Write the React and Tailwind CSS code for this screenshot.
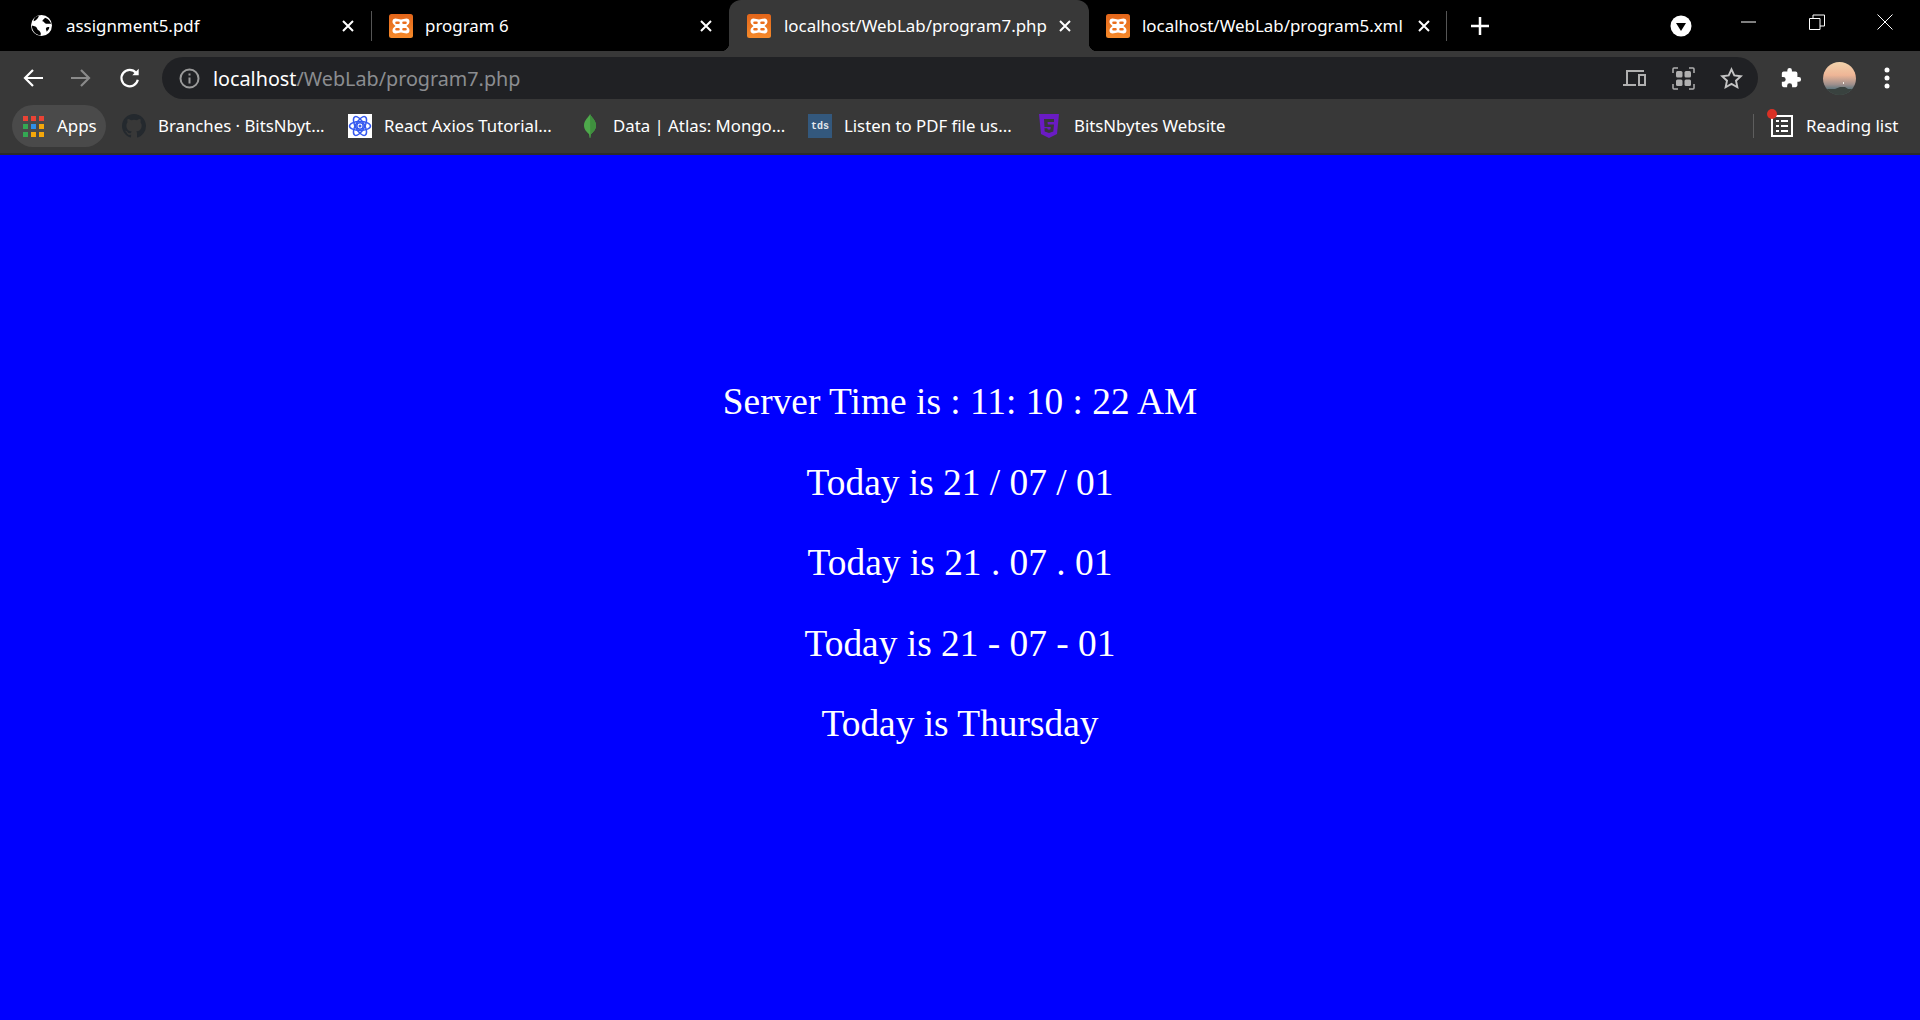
import React from "react";

const UI = { fontFamily: '"Noto Sans", "Open Sans", sans-serif' };

function Xampp() {
  return (
    <svg width="24" height="24" viewBox="0 0 24 24" className="shrink-0">
      <defs>
        <linearGradient id="xg" x1="0" y1="0" x2="0" y2="1">
          <stop offset="0" stopColor="#e2651a" />
          <stop offset="1" stopColor="#f68a2a" />
        </linearGradient>
      </defs>
      <rect width="24" height="24" rx="2.500" fill="url(#xg)" />
      <path d="M6.500 4.500c2 0 3.500 1 5.500 1s3.500-1 5.500-1c3 0 3.500 3 2.500 5-.5 1-1.500 1.800-2.500 2.500 1 .7 2 1.500 2.500 2.500 1 2 .5 5-2.500 5-2 0-3.500-1-5.500-1s-3.500 1-5.500 1c-3 0-3.500-3-2.500-5 .5-1 1.500-1.800 2.500-2.500-1-.7-2-1.500-2.500-2.500-1-2-.5-5 2.500-5z" fill="#fff" />
      <path d="M7.500 8.800h2M14.500 8.800h2M7.500 15.200h2M14.500 15.200h2" stroke="#ea6f1e" strokeWidth="2.600" strokeLinecap="round" />
    </svg>
  );
}

function CloseX() {
  return (
    <svg width="14" height="14" viewBox="0 0 14 14" className="shrink-0">
      <path d="M2 2l10 10M12 2L2 12" stroke="#fff" strokeWidth="2" />
    </svg>
  );
}

function Tab({ width, pad, icon, title, active, sep, gap, closePad }) {
  return (
    <div
      className={`relative flex h-[51px] items-center shrink-0 ${active ? "bg-[#383838] rounded-t-[12px]" : ""}`}
      style={{ width, paddingLeft: pad, paddingRight: closePad }}
    >
      {icon}
      <span className="flex-1 text-[16.900px] text-white whitespace-nowrap" style={{ marginLeft: gap }}>{title}</span>
      <CloseX />
      {sep && <span className="absolute right-0 top-[11px] h-[30px] w-px bg-[#555]" />}
      {active && (
        <>
          <span className="absolute -left-[8px] bottom-0 h-[8px] w-[8px] bg-[radial-gradient(circle_at_0_0,transparent_8px,#383838_8.500px)]" />
          <span className="absolute -right-[8px] bottom-0 h-[8px] w-[8px] bg-[radial-gradient(circle_at_100%_0,transparent_8px,#383838_8.500px)]" />
        </>
      )}
    </div>
  );
}

function Globe() {
  return (
    <svg width="21" height="21" viewBox="0 0 24 24" className="shrink-0">
      <circle cx="12" cy="12" r="12" fill="#fff" />
      <path d="M3 7c3-1 5-3 6-6-3 0-6 2-6 6zM11 23c1-3-1-5-3-6-1-1-1-3-3-4l-4-1c0 6 4 11 10 11zM16 3c-1 2-3 2-3 4 2 0 2 2 4 3h6c-1-3-3-6-7-7zM18 19c1-1 3-3 3-5-2-1-4 0-4 2l1 3z" fill="#000" />
    </svg>
  );
}

function Bookmark({ icon, label, textW, gap, ml }) {
  return (
    <div className="flex items-center shrink-0" style={{ marginLeft: ml }}>
      {icon}
      <span className="text-[16.800px] text-white whitespace-nowrap" style={{ marginLeft: gap, width: textW }}>{label}</span>
    </div>
  );
}

function Grid() {
  const c = ["#ea4335", "#ea4335", "#ea4335", "#34a853", "#2f8fe8", "#f5a70a", "#34a853", "#f5a70a", "#f5a70a"];
  return (
    <div className="grid grid-cols-3 gap-[3px] w-[21px] shrink-0">
      {c.map((x, i) => <span key={i} className="h-[5px] w-[5px]" style={{ background: x }} />)}
    </div>
  );
}

const lines = [
  "Server Time is : 11: 10 : 22 AM",
  "Today is 21 / 07 / 01",
  "Today is 21 . 07 . 01",
  "Today is 21 - 07 - 01",
  "Today is Thursday",
];

export default function App() {
  return (
    <div className="flex h-[1020px] w-[1920px] flex-col overflow-hidden bg-[#0000ff]">
      <header style={UI} className="shrink-0">
        {/* tab strip */}
        <div className="flex h-[51px] items-center bg-black">
          <Tab width={372} pad={31} gap={14} icon={<Globe />} title="assignment5.pdf" closePad={17} sep />
          <Tab width={357} pad={17} gap={12} icon={<Xampp />} title="program 6" closePad={16} />
          <Tab width={360} pad={18} gap={13} icon={<Xampp />} title="localhost/WebLab/program7.php" closePad={17} active />
          <Tab width={358} pad={17} gap={12} icon={<Xampp />} title="localhost/WebLab/program5.xml" closePad={16} sep />
          <svg width="18" height="18" viewBox="0 0 18 18" className="ml-[24px]"><path d="M9 0v18M0 9h18" stroke="#fff" strokeWidth="2.500" /></svg>
          <svg width="22" height="22" viewBox="0 0 22 22" className="ml-[181px]"><circle cx="11" cy="11" r="10.500" fill="#fff" /><path d="M6 8h10l-5 8z" fill="#000" /></svg>
          <svg width="16" height="16" viewBox="0 0 16 16" className="ml-[49px] -mt-[8px]"><path d="M0 8h15" stroke="#fff" strokeWidth="1" /></svg>
          <svg width="16" height="16" viewBox="0 0 16 16" className="ml-[52px] -mt-[8px]"><path d="M.5 4.500h10.500v11H.5zM4 4.500V1h11.500v11H11" fill="none" stroke="#fff" strokeWidth="1" /></svg>
          <svg width="16" height="16" viewBox="0 0 16 16" className="ml-[52px] -mt-[8px]"><path d="M.5.500l15 15M15.500.500l-15 15" stroke="#fff" strokeWidth="1" /></svg>
        </div>
        {/* toolbar */}
        <div className="flex h-[48px] items-end bg-[#383838] pl-[22px]">
          <div className="flex h-[42px] items-center">
            <svg width="22" height="22" viewBox="0 0 22 22"><path d="M21 11H3M11 3l-8 8 8 8" fill="none" stroke="#fff" strokeWidth="2.200" /></svg>
            <svg width="22" height="22" viewBox="0 0 22 22" className="ml-[26px]"><path d="M1 11h18M11 3l8 8-8 8" fill="none" stroke="#8a8a8a" strokeWidth="2.200" /></svg>
            <svg width="22" height="22" viewBox="0 0 24 24" className="ml-[27px]" fill="none" stroke="#fff" strokeWidth="2.400"><path d="M20.500 14a9 9 0 1 1-1.800-7.500" /><path d="M21.500 2v7h-7" fill="#fff" stroke="none" /></svg>
          </div>
          <div className="ml-[21px] flex h-[42px] w-[1596px] items-center rounded-full bg-[#202124] pl-[17px] pr-[15px]">
            <svg width="21" height="21" viewBox="0 0 21 21" className="shrink-0"><circle cx="10.500" cy="10.500" r="9" fill="none" stroke="#9a9a9a" strokeWidth="2" /><path d="M10.500 9.500v6M10.500 5.500v2" stroke="#9a9a9a" strokeWidth="2" /></svg>
            <span className="ml-[13px] flex-1 pt-[2px] text-[19.750px] text-[#8b8d90] whitespace-nowrap"><span className="text-white">localhost</span>/WebLab/program7.php</span>
            <svg width="23" height="19" viewBox="0 0 23 19" fill="none" stroke="#b0b0b0" strokeWidth="2" className="shrink-0"><path d="M20 3V2H4v13M0 16h13" /><rect x="16" y="6" width="6" height="10" /></svg>
            <svg width="23" height="23" viewBox="0 0 23 23" className="ml-[26px] shrink-0" fill="none" stroke="#b0b0b0" strokeWidth="1.500"><path d="M1 6V2a1 1 0 0 1 1-1h4M17 1h4a1 1 0 0 1 1 1v4M22 17v4a1 1 0 0 1-1 1h-4M6 22H2a1 1 0 0 1-1-1v-4" /><g fill="#b0b0b0" stroke="none"><rect x="4" y="4" width="6.500" height="6.500" rx="1.500" /><rect x="12.500" y="4" width="6.500" height="6.500" rx="1.500" /><rect x="4" y="12.500" width="6.500" height="6.500" rx="1.500" /><rect x="12.500" y="12.500" width="6.500" height="6.500" rx="1.500" /></g></svg>
            <svg width="23" height="23" viewBox="0 0 24 24" className="ml-[25px] shrink-0" fill="none" stroke="#c4c4c4" strokeWidth="2"><path d="M12 2.500l2.900 6.300 6.900.8-5.100 4.700 1.400 6.800L12 17.700l-6.100 3.400 1.400-6.800-5.100-4.700 6.900-.8z" /></svg>
          </div>
          <div className="flex h-[42px] items-center">
            <svg width="22" height="22" viewBox="0 0 24 24" fill="#fff" className="ml-[22px]"><path d="M20.500 11H19V7a2 2 0 0 0-2-2h-4V3.500a2.500 2.500 0 0 0-5 0V5H4a2 2 0 0 0-2 2v3.800h1.500a2.700 2.700 0 0 1 0 5.400H2V20a2 2 0 0 0 2 2h3.800v-1.500a2.700 2.700 0 0 1 5.400 0V22H17a2 2 0 0 0 2-2v-4h1.500a2.500 2.500 0 0 0 0-5z" /></svg>
            <svg width="33" height="33" viewBox="0 0 33 33" className="ml-[21px] shrink-0">
              <defs>
                <linearGradient id="sky" x1="0" y1="0" x2="0" y2="1">
                  <stop offset="0" stopColor="#f2d3ac" />
                  <stop offset="0.4" stopColor="#eeb596" />
                  <stop offset="0.68" stopColor="#9f8f8c" />
                  <stop offset="0.8" stopColor="#687a80" />
                  <stop offset="1" stopColor="#4f5f5c" />
                </linearGradient>
                <clipPath id="av"><circle cx="16.500" cy="16.500" r="16.500" /></clipPath>
              </defs>
              <g clipPath="url(#av)">
                <rect width="33" height="33" fill="url(#sky)" />
                <path d="M0 27h12l5-2 5 0 3 2h8v6H0z" fill="#39423f" />
                <rect x="20" y="20" width="1" height="2" fill="#f5f0e8" />
              </g>
            </svg>
            <svg width="6" height="22" viewBox="0 0 6 22" fill="#fff" className="ml-[28px]"><circle cx="3" cy="3" r="2.500" /><circle cx="3" cy="11" r="2.500" /><circle cx="3" cy="19" r="2.500" /></svg>
          </div>
        </div>
        {/* bookmarks bar */}
        <div className="flex h-[56px] items-center border-b-2 border-[#2b2b2b] bg-[#383838] pl-[12px]">
          <div className="flex h-[42px] w-[94px] items-center rounded-full bg-[#4a4a4a] pl-[11px]">
            <Grid />
            <span className="ml-[13px] text-[16.900px] text-white">Apps</span>
          </div>
          <Bookmark ml={16} gap={12} textW={165} label="Branches · BitsNbyt..." icon={
            <svg width="24" height="24" viewBox="0 0 16 16" fill="#24292e"><path d="M8 0C3.580 0 0 3.580 0 8c0 3.540 2.290 6.530 5.470 7.590.4.070.55-.17.55-.38v-1.340c-2.230.48-2.700-1.070-2.700-1.070-.36-.92-.89-1.170-.89-1.170-.73-.5.050-.49.050-.49.8.060 1.230.82 1.230.82.720 1.220 1.870.87 2.330.67.070-.52.280-.87.510-1.070-1.780-.2-3.640-.89-3.640-3.950 0-.87.31-1.590.820-2.150-.08-.2-.36-1.020.080-2.120 0 0 .67-.21 2.200.82a7.700 7.700 0 0 1 4 0c1.530-1.040 2.200-.82 2.200-.82.440 1.100.16 1.920.080 2.120.51.560.82 1.270.82 2.150 0 3.070-1.870 3.750-3.650 3.950.29.250.54.730.54 1.480v2.200c0 .21.150.46.550.38A8.010 8.010 0 0 0 16 8c0-4.420-3.580-8-8-8z" /></svg>
          } />
          <Bookmark ml={25} gap={12} textW={169} label="React Axios Tutorial..." icon={
            <svg width="24" height="24" viewBox="0 0 24 24" className="bg-white"><g fill="none" stroke="#3559f0" strokeWidth="1.500"><ellipse cx="12" cy="12" rx="10.500" ry="4.500" /><ellipse cx="12" cy="12" rx="10.500" ry="4.500" transform="rotate(60 12 12)" /><ellipse cx="12" cy="12" rx="10.500" ry="4.500" transform="rotate(120 12 12)" /><circle cx="12" cy="12" r="3.200" /></g><circle cx="12" cy="12" r="1.500" fill="#3559f0" /></svg>
          } />
          <Bookmark ml={31} gap={17} textW={169} label="Data | Atlas: Mongo..." icon={
            <svg width="12" height="24" viewBox="0 0 12 24"><path d="M6 0c1 3 6 6 6 11.500 0 4.500-3.500 7-5 8.500L6.300 24h-.6L5 20c-1.500-1.500-5-4-5-8.500C0 6 5 3 6 0z" fill="#4ea94b" /><path d="M6 0c1 3 6 6 6 11.500 0 4.500-3.500 7-5 8.500L6.300 24z" fill="#3f8f3e" /></svg>
          } />
          <Bookmark ml={26} gap={12} textW={168} label="Listen to PDF file us..." icon={
            <div className="flex h-[24px] w-[24px] items-center justify-center bg-[#33587d] pt-[2px] text-[10px] leading-none font-bold text-[#e4e8ec]" style={{ fontFamily: '"Liberation Mono", monospace' }}>tds</div>
          } />
          <Bookmark ml={27} gap={15} textW={152} label="BitsNbytes Website" icon={
            <svg width="20" height="24" viewBox="0 0 20 24"><path d="M0 0h20l-2 20-8 4-8-4z" fill="#6a1bc4" /><path d="M5 5h10v3H8.500l.3 2.500H15l-.7 7L10 19l-4.300-1.500-.3-3.200h3l.1 1 1.500.5 1.500-.5.2-2.300H5.500z" fill="#383838" /></svg>
          } />
          <span className="ml-[527px] h-[24px] w-px bg-[#5e5e5e]" />
          <div className="relative ml-[17px] flex items-center">
            <svg width="22" height="22" viewBox="0 0 22 22" className="shrink-0">
              <rect x="1" y="1" width="20" height="20" fill="none" stroke="#fff" strokeWidth="2" />
              <g fill="#fff"><rect x="5" y="5" width="3" height="2" /><rect x="10" y="5" width="7" height="2" /><rect x="5" y="10" width="3" height="2" /><rect x="10" y="10" width="7" height="2" /><rect x="5" y="15" width="3" height="2" /><rect x="10" y="15" width="7" height="2" /></g>
            </svg>
            <span className="absolute -left-[4px] -top-[4px] h-[10px] w-[10px] rounded-full bg-[#d93025]" />
            <span className="ml-[13px] text-[16.900px] text-white whitespace-nowrap">Reading list</span>
          </div>
        </div>
      </header>
      <main className="flex flex-1 flex-col items-center pt-[227px] text-[37.400px] leading-[40px] text-white" style={{ fontFamily: '"Liberation Serif", serif' }}>
        {lines.map((l) => (
          <p key={l} className="mb-[40.500px] whitespace-pre">{l}</p>
        ))}
      </main>
    </div>
  );
}
